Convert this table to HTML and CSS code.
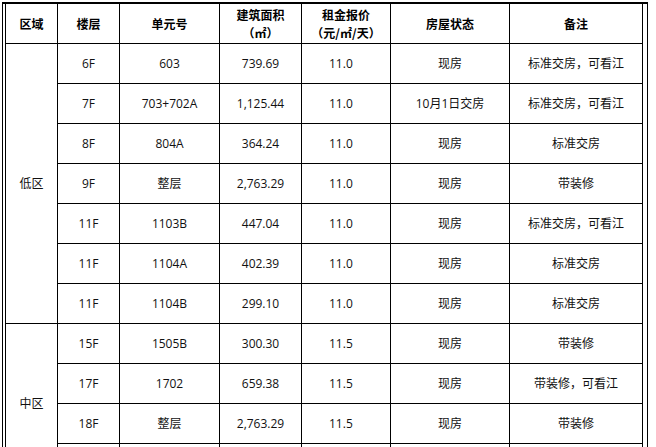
FILE: index.html
```html
<!DOCTYPE html>
<html lang="zh-CN">
<head>
<meta charset="utf-8">
<title>租赁房源表</title>
<link rel="stylesheet" href="styles.css">
</head>
<body>
<div class="sheet">
<table class="grid">
<colgroup>
<col class="c-zone"><col class="c-floor"><col class="c-unit"><col class="c-area"><col class="c-rent"><col class="c-state"><col class="c-note">
</colgroup>
<thead>
<tr>
<th>区域</th><th>楼层</th><th>单元号</th><th>建筑面积<br>（㎡）</th><th>租金报价<br>（元/㎡/天）</th><th>房屋状态</th><th>备注</th>
</tr>
</thead>
<tbody>
<tr><td rowspan="7" class="zone">低区</td><td>6F</td><td>603</td><td>739.69</td><td class="rent">11.0</td><td>现房</td><td>标准交房，可看江</td></tr>
<tr><td>7F</td><td>703+702A</td><td>1,125.44</td><td class="rent">11.0</td><td>10月1日交房</td><td>标准交房，可看江</td></tr>
<tr><td>8F</td><td>804A</td><td>364.24</td><td class="rent">11.0</td><td>现房</td><td>标准交房</td></tr>
<tr><td>9F</td><td>整层</td><td>2,763.29</td><td class="rent">11.0</td><td>现房</td><td>带装修</td></tr>
<tr><td>11F</td><td>1103B</td><td>447.04</td><td class="rent">11.0</td><td>现房</td><td>标准交房，可看江</td></tr>
<tr><td>11F</td><td>1104A</td><td>402.39</td><td class="rent">11.0</td><td>现房</td><td>标准交房</td></tr>
<tr><td>11F</td><td>1104B</td><td>299.10</td><td class="rent">11.0</td><td>现房</td><td>标准交房</td></tr>
<tr><td rowspan="4" class="zone">中区</td><td>15F</td><td>1505B</td><td>300.30</td><td class="rent">11.5</td><td>现房</td><td>带装修</td></tr>
<tr><td>17F</td><td>1702</td><td>659.38</td><td class="rent">11.5</td><td>现房</td><td>带装修，可看江</td></tr>
<tr><td>18F</td><td>整层</td><td>2,763.29</td><td class="rent">11.5</td><td>现房</td><td>带装修</td></tr>
<tr class="next"><td></td><td></td><td></td><td></td><td></td><td></td></tr>
</tbody>
</table>
</div>
</body>
</html>
```

FILE: styles.css
```css
html, body {
  margin: 0;
  padding: 0;
  background: #ffffff;
}
body {
  font-family: "Open Sans", "Noto Sans CJK SC", sans-serif;
  font-size: 12px;
  color: #111111;
  overflow: hidden;
}
.sheet {
  margin: 2px 0 0 2px;
  width: 640px;
  border-top: 2px solid #000;
  border-left: 1px solid #000;
  border-right: 1px solid #000;
  padding: 0 2px;
}
.grid {
  border-collapse: collapse;
  table-layout: fixed;
  width: 638px;
}
.c-zone { width: 52px; }
.c-floor { width: 62px; }
.c-unit { width: 100px; }
.c-area { width: 82px; }
.c-rent { width: 89px; }
.c-state { width: 119px; }
.c-note { width: 133px; }
.grid th,
.grid td {
  border: 1px solid #000;
  padding: 0;
  text-align: center;
  vertical-align: middle;
  height: 39px;
  line-height: 18px;
  white-space: nowrap;
}
.grid th {
  border-top: 0;
  font-family: "Noto Sans CJK SC", sans-serif;
  font-weight: 700;
  font-size: 12px;
  color: #000;
  height: 39px;
}
.grid td.rent {
  text-align: left;
  padding-left: 27px;
}
```
